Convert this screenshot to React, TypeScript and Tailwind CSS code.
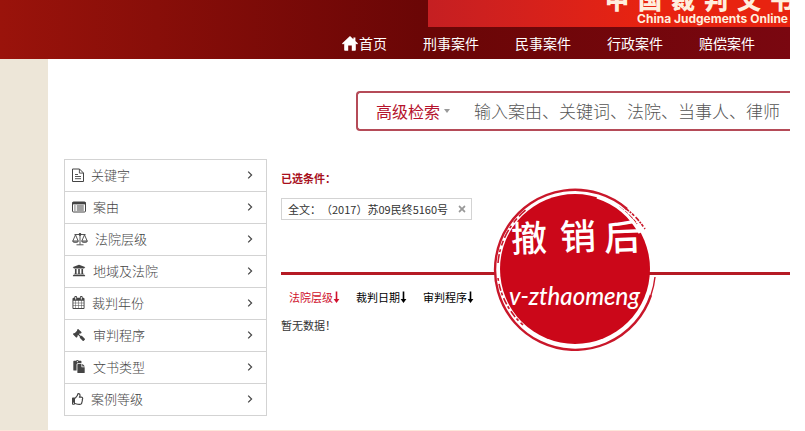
import type { ReactNode } from 'react';
import { FaGavel, FaPaste, FaRegThumbsUp, FaTimes, FaUniversity } from 'react-icons/fa';

const FileIcon = () => (
  <svg viewBox="0 0 12 14" className="h-3.5 w-3" fill="none" stroke="currentColor">
    <path d="M0.5 1h7L11.5 5v8.5h-11z" />
    <path d="M7.4 1v4.1h4M3 6.5h3M3 8.5h6M3 10.7h6" strokeWidth="0.9" />
  </svg>
);

const ListIcon = () => (
  <svg viewBox="0 0 14 12" className="h-3 w-3.5" fill="none" stroke="currentColor">
    <rect x="0.5" y="1" width="13" height="10" rx="1" />
    <path d="M0.5 2.2h13" strokeWidth="2.4" />
    <path d="M2.2 5h1.4M2.2 7h1.4M2.2 9h1.4M4.8 5h7M4.8 7h7M4.8 9h7" strokeWidth="1.2" />
  </svg>
);

const ScaleIcon = () => (
  <svg viewBox="0 0 16 14" className="h-3.5 w-4" fill="none" stroke="currentColor" strokeWidth="0.9">
    <path d="M2.5 2.5h11M8 1v11.5M4.5 12.8h7" />
    <path d="M3.5 2.8L0.8 9M3.5 2.8L6.2 9M12.5 2.8L9.8 9M12.5 2.8l2.7 6.2" />
    <path d="M0.6 9h5.8c-.3 2-5.5 2-5.8 0zM9.6 9h5.8c-.3 2-5.5 2-5.8 0z" fill="currentColor" fillOpacity="0.4" />
    <circle cx="8" cy="2.4" r="1" fill="currentColor" />
  </svg>
);

const CalendarIcon = () => (
  <svg viewBox="0 0 1792 1792" className="h-[13px] w-[13px]" fill="currentColor">
    <path d="M192 1664h288v-288h-288v288zm352 0h320v-288h-320v288zm-352-352h288v-320h-288v320zm352 0h320v-320h-320v320zm-352-384h288v-288h-288v288zm736 736h320v-288h-320v288zm-384-736h320v-288h-320v288zm768 736h288v-288h-288v288zm-384-352h320v-320h-320v320zm-352-864v-288q0-13-9.5-22.5t-22.5-9.5h-64q-13 0-22.5 9.5t-9.5 22.5v288q0 13 9.5 22.5t22.5 9.5h64q13 0 22.5-9.5t9.5-22.5zm736 864h288v-320h-288v320zm-384-384h320v-288h-320v288zm384 0h288v-288h-288v288zm32-480v-288q0-13-9.5-22.5t-22.5-9.5h-64q-13 0-22.5 9.5t-9.5 22.5v288q0 13 9.5 22.5t22.5 9.5h64q13 0 22.5-9.5t9.5-22.5zm384-64v1280q0 52-38 90t-90 38h-1408q-52 0-90-38t-38-90v-1280q0-52 38-90t90-38h128v-96q0-66 47-113t113-47h64q66 0 113 47t47 113v96h384v-96q0-66 47-113t113-47h64q66 0 113 47t47 113v96h128q52 0 90 38t38 90z" />
  </svg>
);

const HomeIcon = () => (
  <svg viewBox="0 0 16 15" className="h-[15px] w-4" fill="currentColor">
    <path d="M8 0L0 7.4l1 1 1.2-.9V14c0 .5.3.8.8.8h3.2V9.5h3.6v5.3H13c.5 0 .8-.3.8-.8V7.5l1.2.9 1-1-2.6-2.5V1.6h-2v1.6z" />
  </svg>
);

const ChevronIcon = () => (
  <svg viewBox="0 0 6 8" className="ml-auto h-2 w-1.5" fill="none" stroke="currentColor" strokeWidth="1.2">
    <path d="M1.2 0.6L4.6 4 1.2 7.4" />
  </svg>
);

const filters: { label: string; icon: ReactNode }[] = [
  { label: '关键字', icon: <FileIcon /> },
  { label: '案由', icon: <ListIcon /> },
  { label: '法院层级', icon: <ScaleIcon /> },
  { label: '地域及法院', icon: <FaUniversity className="h-[13px] w-3.5" /> },
  { label: '裁判年份', icon: <CalendarIcon /> },
  { label: '审判程序', icon: <FaGavel className="h-3 w-3.5 -scale-x-100" /> },
  { label: '文书类型', icon: <FaPaste className="h-[13px] w-3.5" /> },
  { label: '案例等级', icon: <FaRegThumbsUp className="h-3 w-3" /> },
];

const navItems = ['刑事案件', '民事案件', '行政案件', '赔偿案件'];
const siteName = ['中', '国', '裁', '判', '文', '书'];
const sorts = ['法院层级', '裁判日期', '审判程序'];

function SortArrow() {
  return (
    <svg viewBox="0 0 7 12" className="h-3 w-[7px]" fill="currentColor">
      <path d="M2.7 0.5h1.6v7.5H6.4L3.5 12 0.6 8h2.1z" />
    </svg>
  );
}

function Header() {
  return (
    <header className="bg-linear-to-r from-[#9a130b] via-[#6a0606] via-54% to-[#7a0710] text-white">
      <div className="ml-[428px] flex h-[27px] flex-col items-end justify-end overflow-hidden bg-linear-to-r from-[#c51f22] to-[#e82310] to-60% pr-0.5 text-[#ffeedd]">
        <div className="-mr-1.5 flex shrink-0 gap-[9px] text-2xl leading-6 font-black">
          {siteName.map((char) => (
            <span key={char}>{char}</span>
          ))}
        </div>
        <p className="shrink-0 font-[Inter] text-xs leading-4 font-bold">China Judgements Online</p>
      </div>
      <nav className="flex h-8 items-center gap-9 pl-[342px] text-sm leading-5">
        <a href="#home" className="flex items-center gap-px">
          <HomeIcon />
          首页
        </a>
        {navItems.map((item) => (
          <a key={item} href={`#${item}`} className="whitespace-nowrap">
            {item}
          </a>
        ))}
      </nav>
    </header>
  );
}

function SearchBar() {
  return (
    <form className="ml-[308px] flex h-10 items-center rounded-l border-2 border-r-0 border-[#b54b58]">
      <button type="button" className="flex shrink-0 items-center gap-1 pl-[18px] text-base text-[#b5122c]">
        高级检索
        <svg viewBox="0 0 6 4" className="h-1 w-1.5" fill="#999">
          <path d="M0 0h6L3 4z" />
        </svg>
      </button>
      <input
        type="text"
        aria-label="搜索"
        placeholder="输入案由、关键词、法院、当事人、律师"
        className="ml-6 min-w-0 flex-1 text-[17px] font-light text-[#444] outline-none placeholder:text-[#555]"
      />
    </form>
  );
}

function Sidebar() {
  return (
    <aside className="w-[203px] shrink-0 border border-b-0 border-[#d3d3d3]">
      {filters.map((filter) => (
        <button
          key={filter.label}
          type="button"
          className="flex h-8 w-full items-center border-b border-[#d3d3d3] pr-[13px] pb-0.5 pl-[7px] text-[13px] font-light text-[#444]"
        >
          {filter.icon}
          <span className="ml-[7px]">{filter.label}</span>
          <ChevronIcon />
        </button>
      ))}
    </aside>
  );
}

function Seal() {
  return (
    <svg viewBox="0 0 164 164" className="h-[164px] w-[164px]">
      <path d="M136 24A80 80 0 1 0 158 108L150 82z" fill="#fff" />
      <circle cx="82" cy="82" r="75" fill="#cb0719" />
      <g fill="none" stroke="#c9172a">
        <path d="M134 22A80 80 0 1 0 158 108" strokeWidth="2.4" />
        <path d="M132 21A79 79 0 0 1 152 42" strokeWidth="1.6" strokeDasharray="5 1 2 1 3 2" />
        <path d="M126 20A77 77 0 0 1 144 37" strokeWidth="1.4" strokeDasharray="6 1 4 1" />
        <path d="M5 76A77 77 0 0 1 34 22" strokeWidth="1.6" strokeDasharray="9 2 3 4 5 3" />
        <path d="M5 91A77 77 0 0 0 30 138" strokeWidth="1.6" strokeDasharray="3 3 7 2" />
        <path d="M162 90A80 80 0 0 1 158 108" strokeWidth="1.4" />
      </g>
      {/* gap between disc and rim, upper right */}
      <path d="M104 10A75 75 0 0 1 147 46" fill="none" stroke="#fff" strokeWidth="3" />
      <g fill="#fff" fontFamily="'Noto Sans CJK SC', sans-serif" fontSize="36" fontWeight="500" transform="rotate(-2 82 50)">
        <text x="18" y="63">撤</text>
        <text x="67" y="63">销</text>
        <text x="111" y="65">后</text>
      </g>
      <text x="16" y="118" fill="#fff" fontFamily="Lato, sans-serif" fontStyle="italic" fontWeight="500" fontSize="24">
        v-zthaomeng
      </text>
    </svg>
  );
}

function Results() {
  return (
    <section className="min-w-0 flex-1 text-[11px] leading-4 text-[#333]">
      <h2 className="pt-[11px] font-bold text-[#a8101c]">已选条件：</h2>
      <div className="mt-3 flex h-[22px] w-[191px] items-center justify-between border border-[#d3d3d3] pr-1 pl-1.5 whitespace-nowrap [text-spacing-trim:space-all]">
        <span>全文：（2017）苏09民终5160号</span>
        <button type="button" aria-label="删除" className="text-[#999]">
          <FaTimes className="h-2.5 w-2.5" />
        </button>
      </div>
      <div className="relative mt-[52px] border-t-[3px] border-[#b51a24] pt-3.5">
        <div className="flex gap-4 pl-2">
          {sorts.map((sort, index) => (
            <button
              key={sort}
              type="button"
              className={`flex items-center ${index === 0 ? 'text-[#d0122d]' : 'text-black'}`}
            >
              {sort}
              <SortArrow />
            </button>
          ))}
        </div>
        <p className="mt-3">暂无数据！</p>
        <div className="absolute -top-[88px] left-[212px]">
          <Seal />
        </div>
      </div>
    </section>
  );
}

export default function App() {
  return (
    <div className="min-h-screen bg-white pr-[15px] font-['Noto_Sans_CJK_SC',sans-serif]">
      <div className="flex min-h-screen flex-col border-b border-[#fde6da]">
        <Header />
        <div className="flex flex-1">
          <div className="w-12 shrink-0 bg-[#ede6d8]" />
          <main className="min-w-0 flex-1 pt-8">
            <SearchBar />
            <div className="mt-7 flex gap-3.5 pl-4">
              <Sidebar />
              <Results />
            </div>
          </main>
        </div>
      </div>
    </div>
  );
}
